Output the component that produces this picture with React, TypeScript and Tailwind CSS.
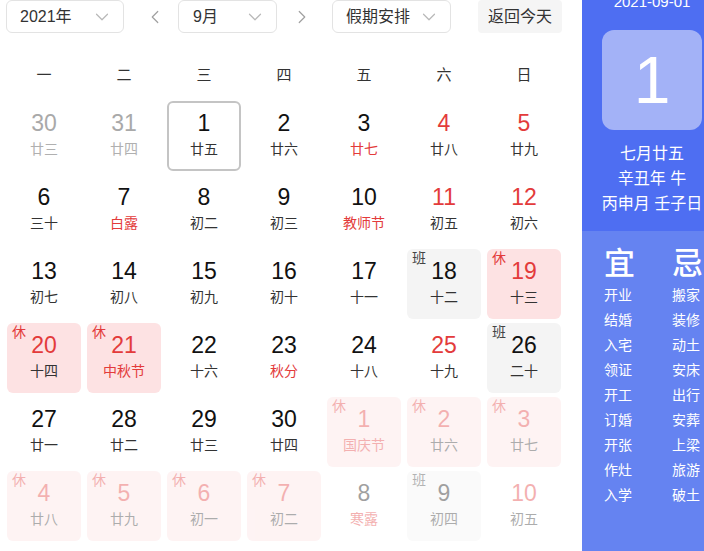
import React from "react";
import { ChevronDown, ChevronLeft, ChevronRight } from "lucide-react";

type Cell = {
  day: number;
  lunar: string;
  other?: "prev" | "next";
  redNum?: boolean;
  redLunar?: boolean;
  tag?: "休" | "班";
  selected?: boolean;
};

const cells: Cell[] = [
  { day: 30, lunar: "廿三", other: "prev" },
  { day: 31, lunar: "廿四", other: "prev" },
  { day: 1, lunar: "廿五", selected: true },
  { day: 2, lunar: "廿六" },
  { day: 3, lunar: "廿七", redLunar: true },
  { day: 4, lunar: "廿八", redNum: true },
  { day: 5, lunar: "廿九", redNum: true },

  { day: 6, lunar: "三十" },
  { day: 7, lunar: "白露", redLunar: true },
  { day: 8, lunar: "初二" },
  { day: 9, lunar: "初三" },
  { day: 10, lunar: "教师节", redLunar: true },
  { day: 11, lunar: "初五", redNum: true },
  { day: 12, lunar: "初六", redNum: true },

  { day: 13, lunar: "初七" },
  { day: 14, lunar: "初八" },
  { day: 15, lunar: "初九" },
  { day: 16, lunar: "初十" },
  { day: 17, lunar: "十一" },
  { day: 18, lunar: "十二", tag: "班" },
  { day: 19, lunar: "十三", tag: "休", redNum: true },

  { day: 20, lunar: "十四", tag: "休", redNum: true },
  { day: 21, lunar: "中秋节", tag: "休", redNum: true, redLunar: true },
  { day: 22, lunar: "十六" },
  { day: 23, lunar: "秋分", redLunar: true },
  { day: 24, lunar: "十八" },
  { day: 25, lunar: "十九", redNum: true },
  { day: 26, lunar: "二十", tag: "班" },

  { day: 27, lunar: "廿一" },
  { day: 28, lunar: "廿二" },
  { day: 29, lunar: "廿三" },
  { day: 30, lunar: "廿四" },
  { day: 1, lunar: "国庆节", other: "next", tag: "休", redNum: true, redLunar: true },
  { day: 2, lunar: "廿六", other: "next", tag: "休", redNum: true },
  { day: 3, lunar: "廿七", other: "next", tag: "休", redNum: true },

  { day: 4, lunar: "廿八", other: "next", tag: "休", redNum: true },
  { day: 5, lunar: "廿九", other: "next", tag: "休", redNum: true },
  { day: 6, lunar: "初一", other: "next", tag: "休", redNum: true },
  { day: 7, lunar: "初二", other: "next", tag: "休", redNum: true },
  { day: 8, lunar: "寒露", other: "next", redLunar: true },
  { day: 9, lunar: "初四", other: "next", tag: "班" },
  { day: 10, lunar: "初五", other: "next", redNum: true },
];

const weekdays = ["一", "二", "三", "四", "五", "六", "日"];

const yi = ["开业", "结婚", "入宅", "领证", "开工", "订婚", "开张", "作灶", "入学"];
const ji = ["搬家", "装修", "动土", "安床", "出行", "安葬", "上梁", "旅游", "破土"];

function Select({ label, width, textPad }: { label: string; width: string; textPad: string }) {
  return (
    <div
      className={`${width} h-[33px] border border-[#e3e3e3] rounded-[6px] flex items-center justify-between ${textPad} pr-[10px] text-[16px] text-[#333]`}
    >
      <span>{label}</span>
      <ChevronDown className="w-[22px] h-[22px] text-[#b8b8b8]" strokeWidth={1.3} />
    </div>
  );
}

function DayCell({ c }: { c: Cell }) {
  let bg = "bg-white";
  if (c.tag === "休") bg = "bg-[#fde2e3]";
  if (c.tag === "班") bg = "bg-[#f4f4f4]";

  let numColor = "text-[#111]";
  if (c.redNum) numColor = "text-[#e33b3b]";
  if (c.other === "prev") numColor = "text-[#a9a9a9]";

  let lunarColor = "text-[#333]";
  if (c.redLunar) lunarColor = "text-[#e33b3b]";
  if (c.other === "prev") lunarColor = "text-[#b0b0b0]";

  return (
    <div
      className={`relative h-[70px] rounded-[6px] flex flex-col items-center pt-[8px] ${bg} ${
        c.selected ? "border-2 border-[#c4c4c4]" : ""
      } ${c.other === "next" ? "opacity-40" : ""}`}
    >
      {c.tag && (
        <span
          className={`absolute left-[5px] top-[2px] text-[14px] leading-none ${
            c.tag === "休" ? "text-[#e33b3b]" : "text-[#444]"
          }`}
        >
          {c.tag}
        </span>
      )}
      <span className={`text-[23px] leading-[28px] ${numColor} ${c.selected ? "-mt-[2px]" : ""}`}>{c.day}</span>
      <span className={`text-[14px] leading-[20px] mt-[2px] ${lunarColor}`}>{c.lunar}</span>
    </div>
  );
}

export default function App() {
  return (
    <div
      className="w-[704px] h-[551px] overflow-hidden flex bg-white"
      style={{ fontFamily: '"Liberation Sans", Arial, "Noto Sans CJK SC", sans-serif' }}
    >
      {/* calendar */}
      <div className="w-[582px] shrink-0 flex flex-col">
        <div className="flex items-center pl-[6px] h-[33px]">
          <Select label="2021年" width="w-[118px]" textPad="pl-[13px]" />
          <button className="ml-[20px] w-[22px] flex justify-center text-[#a0a0a0]">
            <ChevronLeft className="w-[26px] h-[26px]" strokeWidth={1.3} />
          </button>
          <div className="ml-[12px]">
            <Select label="9月" width="w-[99px]" textPad="pl-[14px]" />
          </div>
          <button className="ml-[14px] w-[22px] flex justify-center text-[#a0a0a0]">
            <ChevronRight className="w-[26px] h-[26px]" strokeWidth={1.3} />
          </button>
          <div className="ml-[19px]">
            <Select label="假期安排" width="w-[119px]" textPad="pl-[13px]" />
          </div>
          <button className="ml-[27px] w-[84px] h-[33px] rounded-[4px] bg-[#f5f5f5] text-[16px] text-[#333]">
            返回今天
          </button>
        </div>

        <div className="grid grid-cols-[repeat(7,74px)] gap-x-[6px] pl-[7px] mt-[32px]">
          {weekdays.map((w) => (
            <div key={w} className="text-center text-[15px] leading-[20px] text-[#333]">
              {w}
            </div>
          ))}
        </div>

        <div className="grid grid-cols-[repeat(7,74px)] gap-x-[6px] gap-y-[4px] pl-[7px] mt-[16px]">
          {cells.map((c, i) => (
            <DayCell key={i} c={c} />
          ))}
        </div>
      </div>

      {/* side panel */}
      <div className="w-[140px] shrink-0 flex flex-col text-white">
        <div className="bg-[#4e6ef2] h-[231px] flex flex-col items-center">
          <div className="text-[15px] leading-[18px] -mt-[7px]">2021-09-01</div>
          <div className="mt-[19px] w-[100px] h-[100px] rounded-[12px] bg-[#a3b2f7] flex items-center justify-center text-[66px] leading-none font-light">
            1
          </div>
          <div className="mt-[11px] text-[16px] leading-[25px] text-center whitespace-nowrap">
            <div>七月廿五</div>
            <div>辛丑年 牛</div>
            <div>丙申月 壬子日</div>
          </div>
        </div>
        <div className="flex-1 bg-[#6583f1] flex pl-[22px] pt-[16px]">
          <div className="w-[68px] flex flex-col">
            <div className="text-[31px] leading-[34px] font-medium">宜</div>
            <div className="mt-[2px] text-[14px] leading-[25px]">
              {yi.map((t) => (
                <div key={t}>{t}</div>
              ))}
            </div>
          </div>
          <div className="flex flex-col">
            <div className="text-[31px] leading-[34px] font-medium">忌</div>
            <div className="mt-[2px] text-[14px] leading-[25px]">
              {ji.map((t) => (
                <div key={t}>{t}</div>
              ))}
            </div>
          </div>
        </div>
      </div>
    </div>
  );
}
